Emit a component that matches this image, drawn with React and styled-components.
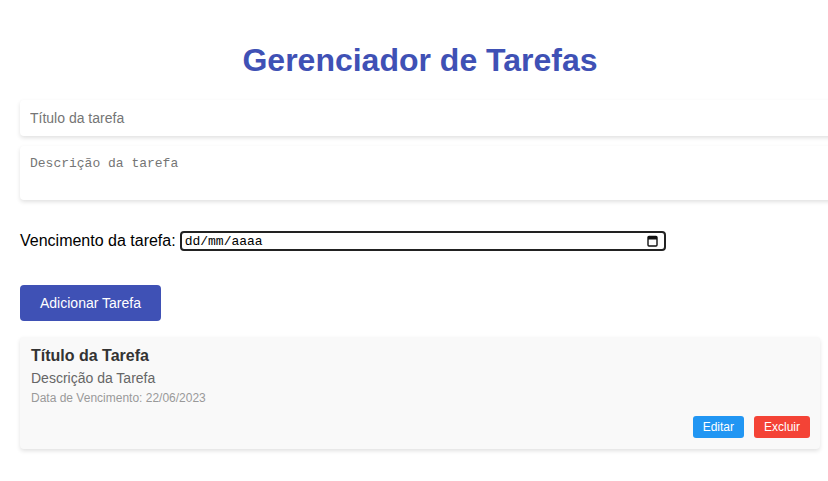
import React from 'react';
import styled, { createGlobalStyle } from 'styled-components';

const GlobalStyle = createGlobalStyle`
  body {
    margin: 0;
    background: #fff;
    font-family: 'Liberation Sans', Arial, sans-serif;
  }
`;

const CalendarIcon = () => (
  <svg width='11' height='12' viewBox='0 0 11 12' aria-hidden='true'>
    <rect x='1' y='1.5' width='9' height='9.5' rx='1' fill='none' stroke='#111' strokeWidth='1.4' />
    <rect x='1' y='1.5' width='9' height='3' fill='#111' />
  </svg>
);

const App = () => {
  return (
    <>
      <GlobalStyle />
      <Wrapper>
        <Heading>Gerenciador de Tarefas</Heading>
        <Form>
          <TextInput type='text' placeholder='Título da tarefa' />
          <TextArea placeholder='Descrição da tarefa' rows={2} />
          <DateRow>
            <label htmlFor='due'>Vencimento da tarefa:</label>
            <DateField>
              <DateInput id='due' type='text' placeholder='dd/mm/aaaa' />
              <IconSlot>
                <CalendarIcon />
              </IconSlot>
            </DateField>
          </DateRow>
          <AddButton type='button'>Adicionar Tarefa</AddButton>
        </Form>
        <TaskList>
          <TaskCard>
            <TaskTitle>Título da Tarefa</TaskTitle>
            <TaskDesc>Descrição da Tarefa</TaskDesc>
            <TaskDate>Data de Vencimento: 22/06/2023</TaskDate>
            <Actions>
              <SmallButton $color='#2196f3'>Editar</SmallButton>
              <SmallButton $color='#f44336'>Excluir</SmallButton>
            </Actions>
          </TaskCard>
        </TaskList>
      </Wrapper>
    </>
  );
};

const Wrapper = styled.div`
  width: 800px;
  padding: 20px;
`;

const Heading = styled.h1`
  margin: 22px 0 21px;
  text-align: center;
  font-size: 32px;
  line-height: 37px;
  color: #3f51b5;
`;

const Form = styled.div`
  display: flex;
  flex-direction: column;
  align-items: flex-start;
`;

const fieldStyles = `
  width: 100%;
  padding: 10px;
  border: none;
  border-radius: 4px;
  box-shadow: 0 2px 4px rgba(0, 0, 0, 0.12);
  background: #fff;
  outline: none;
  margin: 0 0 10px;
`;

const TextInput = styled.input`
  ${fieldStyles}
  height: 16px;
  font-family: 'Liberation Sans', Arial, sans-serif;
  font-size: 14px;
  line-height: 16px;
  &::placeholder {
    color: #757575;
  }
`;

const TextArea = styled.textarea`
  ${fieldStyles}
  height: 34px;
  resize: none;
  font-family: 'Liberation Mono', monospace;
  font-size: 13px;
  line-height: 15px;
  &::placeholder {
    color: #757575;
  }
`;

const DateRow = styled.div`
  display: flex;
  align-items: center;
  width: 100%;
  margin: 21px 0 0;
  font-size: 16px;
  color: #000;

  label {
    margin-right: 4px;
  }
`;

const DateField = styled.div`
  position: relative;
  width: 486px;
`;

const DateInput = styled.input`
  display: block;
  box-sizing: border-box;
  width: 100%;
  height: 20px;
  padding: 1px 22px 1px 3px;
  border: 2px solid #222;
  border-radius: 4px;
  outline: none;
  font-family: 'Liberation Mono', monospace;
  font-size: 13px;
  &::placeholder {
    color: #000;
  }
`;

const IconSlot = styled.span`
  position: absolute;
  top: 4px;
  right: 8px;
  display: flex;
`;

const AddButton = styled.button`
  margin-top: 34px;
  padding: 10px 20px;
  border: none;
  border-radius: 4px;
  background: #3f51b5;
  color: #fff;
  font-family: 'Liberation Sans', Arial, sans-serif;
  font-size: 14px;
  line-height: 16px;
  cursor: pointer;
`;

const TaskList = styled.div`
  margin-top: 16px;
`;

const TaskCard = styled.div`
  padding: 10px 10px 11px 11px;
  border-radius: 4px;
  background: #f9f9f9;
  box-shadow: 0 2px 4px rgba(0, 0, 0, 0.12);
`;

const TaskTitle = styled.h3`
  margin: 0 0 5px;
  font-size: 16px;
  line-height: 18px;
  color: #333;
`;

const TaskDesc = styled.p`
  margin: 0 0 5px;
  font-size: 14px;
  line-height: 16px;
  color: #666;
`;

const TaskDate = styled.p`
  margin: 0;
  font-size: 12px;
  line-height: 14px;
  color: #999;
`;

const Actions = styled.div`
  display: flex;
  justify-content: flex-end;
  gap: 10px;
  margin-top: 11px;
`;

const SmallButton = styled.button`
  padding: 4px 10px;
  border: none;
  border-radius: 3px;
  background: ${(p) => p.$color};
  color: #fff;
  font-family: 'Liberation Sans', Arial, sans-serif;
  font-size: 12px;
  line-height: 14px;
  cursor: pointer;
`;

export default App;
